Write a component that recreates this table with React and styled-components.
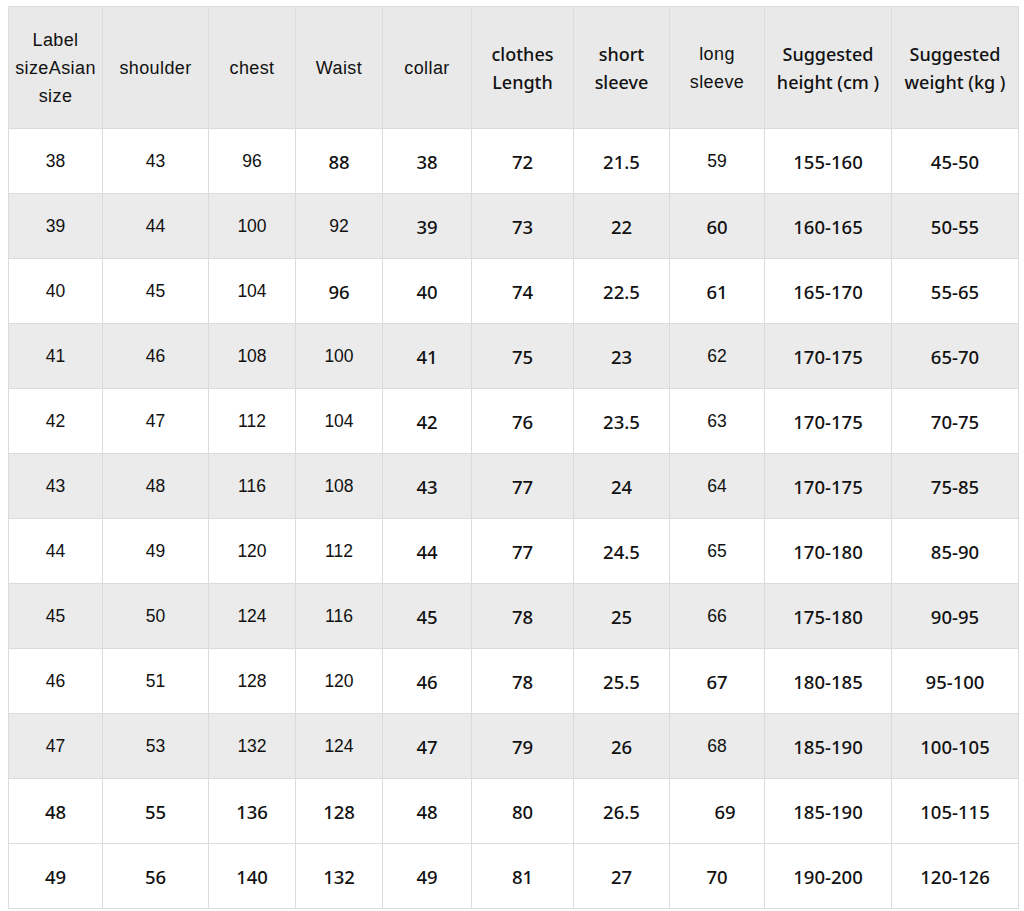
import React from "react";
import styled, { createGlobalStyle } from "styled-components";

const GlobalStyle = createGlobalStyle`
  body {
    margin: 0;
    background: #ffffff;
  }
`;

const widths = [94, 106, 87, 87, 89, 102, 96, 95, 127, 127];

const headers = [
  { lines: ["Label", "sizeAsian", "size"] },
  { lines: ["shoulder"] },
  { lines: ["chest"] },
  { lines: ["Waist"] },
  { lines: ["collar"] },
  { lines: ["clothes", "Length"], big: true },
  { lines: ["short", "sleeve"], big: true },
  { lines: ["long", "sleeve"] },
  { lines: ["Suggested", "height (cm )"], big: true },
  { lines: ["Suggested", "weight (kg )"], big: true },
];

const rows = [
  ["38", "43", "96", "88", "38", "72", "21.5", "59", "155-160", "45-50"],
  ["39", "44", "100", "92", "39", "73", "22", "60", "160-165", "50-55"],
  ["40", "45", "104", "96", "40", "74", "22.5", "61", "165-170", "55-65"],
  ["41", "46", "108", "100", "41", "75", "23", "62", "170-175", "65-70"],
  ["42", "47", "112", "104", "42", "76", "23.5", "63", "170-175", "70-75"],
  ["43", "48", "116", "108", "43", "77", "24", "64", "170-175", "75-85"],
  ["44", "49", "120", "112", "44", "77", "24.5", "65", "170-180", "85-90"],
  ["45", "50", "124", "116", "45", "78", "25", "66", "175-180", "90-95"],
  ["46", "51", "128", "120", "46", "78", "25.5", "67", "180-185", "95-100"],
  ["47", "53", "132", "124", "47", "79", "26", "68", "185-190", "100-105"],
  ["48", "55", "136", "128", "48", "80", "26.5", "69", "185-190", "105-115"],
  ["49", "56", "140", "132", "49", "81", "27", "70", "190-200", "120-126"],
];

// which cells were typed in the larger, rounder face
const bigColumns = [4, 5, 6, 8, 9];
const isBig = (r, c) => {
  if (r >= 10) return true;
  if (bigColumns.includes(c)) return true;
  if (c === 3 && (r === 0 || r === 2)) return true;
  if (c === 7 && [1, 2, 8].includes(r)) return true;
  return false;
};

export default function App() {
  return (
    <>
      <GlobalStyle />
      <Page>
        <Chart>
          <colgroup>
            {widths.map((w, i) => (
              <col key={i} style={{ width: w }} />
            ))}
          </colgroup>
          <thead>
            <HeadRow>
              {headers.map((h, i) => (
                <HeadCell key={i} $big={h.big}>
                  {h.lines.map((l, j) => (
                    <span key={j}>
                      {l}
                      {j < h.lines.length - 1 && <br />}
                    </span>
                  ))}
                </HeadCell>
              ))}
            </HeadRow>
          </thead>
          <tbody>
            {rows.map((row, r) => (
              <Row key={r} $shaded={r % 2 === 1 && r < 11}>
                {row.map((v, c) => (
                  <Cell
                    key={c}
                    $big={isBig(r, c)}
                    $nudge={r === 10 && c === 7}
                  >
                    {v}
                  </Cell>
                ))}
              </Row>
            ))}
          </tbody>
        </Chart>
      </Page>
    </>
  );
}

const Page = styled.div`
  padding: 6px 6px 4px 8px;
`;

const Chart = styled.table`
  width: 1010px;
  table-layout: fixed;
  border-collapse: collapse;
  border: 1px solid #dadada;
`;

const HeadRow = styled.tr`
  height: 122px;
  background: #e9e9e9;
`;

const HeadCell = styled.th`
  padding: 0 2px;
  border: 1px solid #dcdcdc;
  text-align: center;
  vertical-align: middle;
  color: #111111;
  font-weight: ${(p) => (p.$big ? 500 : "normal")};
  font-family: ${(p) =>
    p.$big ? `"Noto Sans", sans-serif` : `"Liberation Sans", Arial, sans-serif`};
  font-size: ${(p) => (p.$big ? "18px" : "18px")};
  letter-spacing: ${(p) => (p.$big ? "0" : "0.4px")};
  line-height: 28px;
  white-space: nowrap;
`;

const Row = styled.tr`
  height: 65px;
  background: ${(p) => (p.$shaded ? "#ebebeb" : "#ffffff")};
`;

const Cell = styled.td`
  border: 1px solid #dcdcdc;
  text-align: center;
  vertical-align: middle;
  padding: ${(p) => (p.$nudge ? "0 0 0 16px" : "0")};
  color: #111111;
  font-weight: ${(p) => (p.$big ? 500 : "normal")};
  font-family: ${(p) =>
    p.$big ? `"Noto Sans", sans-serif` : `"Liberation Sans", Arial, sans-serif`};
  font-size: ${(p) => (p.$big ? "18.5px" : "17.5px")};
`;
